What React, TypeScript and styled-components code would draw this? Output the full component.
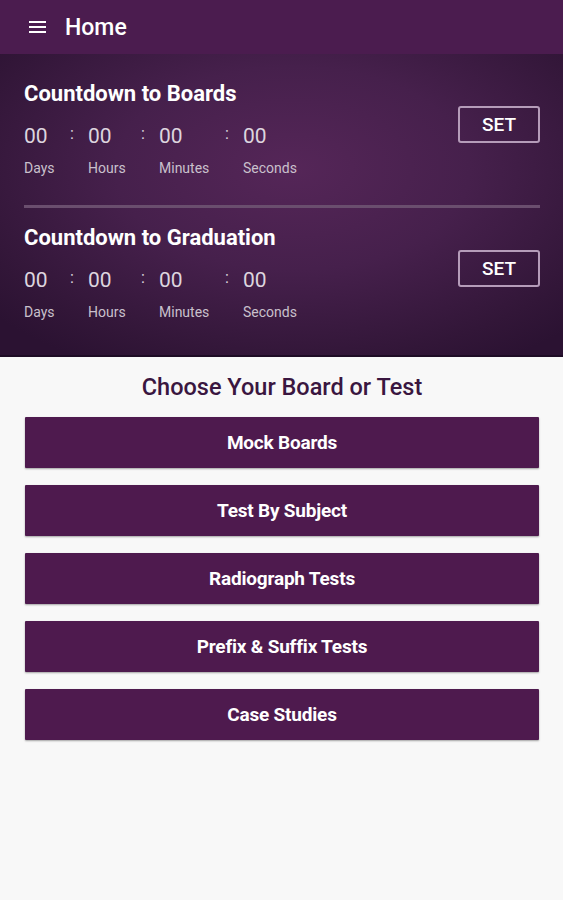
import React from "react";
import styled, { createGlobalStyle } from "styled-components";

const GlobalStyle = createGlobalStyle`
  html, body {
    margin: 0;
    padding: 0;
    background: #f8f8f8;
    font-family: Roboto, "Liberation Sans", sans-serif;
  }
  * { box-sizing: border-box; }
`;

const countdowns = [
  { title: "Countdown to Boards" },
  { title: "Countdown to Graduation" },
];

const units = [
  { label: "Days", width: 46 },
  { label: "Hours", width: 53 },
  { label: "Minutes", width: 66 },
  { label: "Seconds", width: 60 },
];

const tests = ["Mock Boards", "Test By Subject", "Radiograph Tests", "Prefix & Suffix Tests", "Case Studies"];

const App = () => {
  return (
    <Page>
      <GlobalStyle />
      <AppBar>
        <MenuIcon width='17' height='12' viewBox='0 0 17 12'>
          <rect x='0' y='0' width='17' height='2' fill='#fff' />
          <rect x='0' y='5' width='17' height='2' fill='#fff' />
          <rect x='0' y='10' width='17' height='2' fill='#fff' />
        </MenuIcon>
        <AppTitle>Home</AppTitle>
      </AppBar>
      <Header>
        {countdowns.map((c, i) => (
          <React.Fragment key={c.title}>
            {i > 0 && <Divider />}
            <CountdownRow>
              <CountdownBody>
                <CountdownTitle>{c.title}</CountdownTitle>
                <Units>
                  {units.map((u, j) => (
                    <React.Fragment key={u.label}>
                      {j > 0 && <Colon>:</Colon>}
                      <Unit $width={u.width}>
                        <UnitValue>00</UnitValue>
                        <UnitLabel>{u.label}</UnitLabel>
                      </Unit>
                    </React.Fragment>
                  ))}
                </Units>
              </CountdownBody>
              <SetButton>SET</SetButton>
            </CountdownRow>
          </React.Fragment>
        ))}
      </Header>
      <Content>
        <ChooseTitle>Choose Your Board or Test</ChooseTitle>
        <ButtonList>
          {tests.map(t => (
            <TestButton key={t}>{t}</TestButton>
          ))}
        </ButtonList>
      </Content>
    </Page>
  );
};

export default App;

const Page = styled.div`
  width: 563px;
  min-height: 900px;
  background: #f8f8f8;
`;

const AppBar = styled.div`
  height: 54px;
  background: #4b1c4f;
  display: flex;
  align-items: center;
  padding-left: 29px;
`;

const MenuIcon = styled.svg`
  display: block;
  margin-top: -1px;
`;

const AppTitle = styled.div`
  color: #fff;
  font-size: 23px;
  font-weight: 500;
  margin-left: 19px;
  margin-top: 1px;
`;

const Header = styled.div`
  height: 303px;
  padding: 26px 23px 0 24px;
  background: radial-gradient(ellipse 70% 75% at 52% 38%, #552658 0%, #46204c 45%, #321638 85%, #2b1232 100%);
  border-bottom: 2px solid #1e0c25;
`;

const CountdownRow = styled.div`
  display: flex;
  justify-content: space-between;
  align-items: flex-start;
`;

const CountdownBody = styled.div`
  display: flex;
  flex-direction: column;
`;

const CountdownTitle = styled.div`
  color: #fff;
  font-size: 22px;
  font-weight: 700;
  line-height: 28px;
`;

const Units = styled.div`
  display: flex;
  margin-top: 14px;
`;

const Unit = styled.div<{ $width: number }>`
  width: ${p => p.$width}px;
  display: flex;
  flex-direction: column;
`;

const UnitValue = styled.div`
  color: #ddd5df;
  font-size: 21px;
  line-height: 28px;
`;

const UnitLabel = styled.div`
  color: #c9c0cc;
  font-size: 14px;
  line-height: 18px;
  margin-top: 9px;
`;

const Colon = styled.div`
  width: 18px;
  color: #ddd5df;
  font-size: 16px;
  line-height: 24px;
`;

const SetButton = styled.button`
  width: 82px;
  height: 37px;
  margin-top: 26px;
  background: transparent;
  border: 2px solid #b59cb9;
  border-radius: 3px;
  color: #fff;
  font-family: Roboto, "Liberation Sans", sans-serif;
  font-size: 19px;
  font-weight: 500;
  padding: 0;
`;

const Divider = styled.div`
  height: 3px;
  background: #6a4e6e;
  margin: 28px 0 16px;
`;

const Content = styled.div`
  padding: 16px 24px 0 25px;
`;

const ChooseTitle = styled.div`
  text-align: center;
  color: #3a1640;
  font-size: 23.5px;
  font-weight: 500;
  line-height: 28px;
`;

const ButtonList = styled.div`
  display: flex;
  flex-direction: column;
  gap: 17px;
  margin-top: 16px;
`;

const TestButton = styled.button`
  height: 51px;
  width: 100%;
  background: #4e1a4e;
  border: none;
  border-radius: 1px;
  box-shadow: 0 1px 2px rgba(0, 0, 0, 0.35);
  color: #fff;
  font-family: Roboto, "Liberation Sans", sans-serif;
  font-size: 19px;
  font-weight: 700;
  letter-spacing: -0.2px;
  padding: 0;
`;
